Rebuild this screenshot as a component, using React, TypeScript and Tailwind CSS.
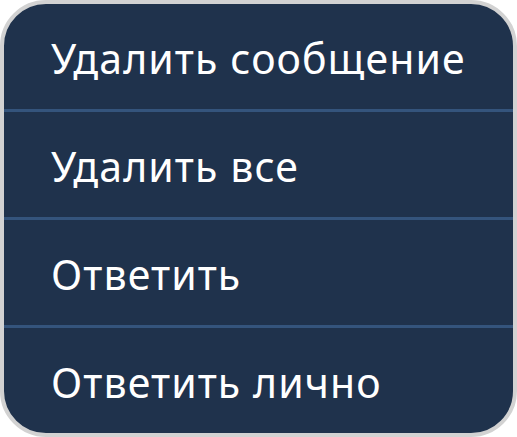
const items = ['Удалить сообщение', 'Удалить все', 'Ответить', 'Ответить лично'];

export default function App() {
  return (
    <div className="w-[517px] h-[437px] bg-white">
      <div
        className="flex h-full w-full flex-col overflow-hidden rounded-[46px] border-4 border-[#d2d2d2] bg-[#1f324c] text-white"
        style={{ fontFamily: '"Noto Sans", "Open Sans", sans-serif' }}
      >
        {items.map((label, i) => (
          <div key={label} className="flex flex-col">
            {i > 0 && <div className="h-[3px] bg-[#34547c]" />}
            <div className="flex h-[105px] items-center pl-[47px] pt-[3px] text-[41px] leading-none tracking-[1.1px]">
              {label}
            </div>
          </div>
        ))}
      </div>
    </div>
  );
}
